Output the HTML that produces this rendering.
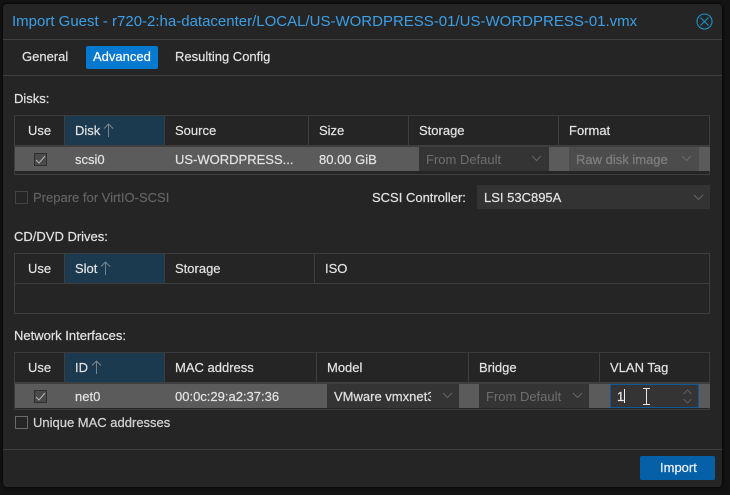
<!DOCTYPE html>
<html><head><meta charset="utf-8">
<style>
html,body{margin:0;padding:0;background:#131313;width:730px;height:495px;overflow:hidden}
*{box-sizing:border-box}
body{font-family:"Liberation Sans",sans-serif;font-size:12px;color:#e6e6e6;position:relative}
.a{position:absolute}
.t{position:absolute;white-space:nowrap;line-height:16px;font-size:13px;color:#e3e3e3;-webkit-text-stroke:.2px #e3e3e3;margin-top:1px}
.h{position:absolute;background:#3e3e3e}
.dim{color:#6f6f6f;-webkit-text-stroke:0}
</style></head><body>
<div class="a" style="left:3px;top:4px;width:719px;height:483px;background:#252525;border-radius:4px 4px 4px 4px;box-shadow:0 0 4px #000"></div>
<div class="t" style="left:12px;top:12px;font-size:15px;line-height:18px;color:#3c9fe6;-webkit-text-stroke:0">Import Guest - r720-2:ha-datacenter/LOCAL/US-WORDPRESS-01/US-WORDPRESS-01.vmx</div>
<svg class="a" style="left:696px;top:13px" width="17" height="17" viewBox="0 0 17 17" fill="none" stroke="#1f8fc4" stroke-width="1.1"><circle cx="8.5" cy="8.5" r="7.5"/><path d="M4.500 4.500l8 8M12.500 4.500l-8 8"/></svg>

<div class="h" style="left:3px;top:39px;width:719px;height:1px;background:#3f3f3f"></div>
<div class="h" style="left:3px;top:75px;width:719px;height:1px;background:#3f3f3f"></div>
<div class="a" style="left:86px;top:46px;width:72px;height:23px;background:#0578d0;border-radius:2px"></div>
<div class="t" style="left:22px;top:48px">General</div>
<div class="t" style="left:93px;top:48px;color:#fff;-webkit-text-stroke:.2px #fff">Advanced</div>
<div class="t" style="left:175px;top:48px">Resulting Config</div>

<!-- Disks -->
<div class="t" style="left:14px;top:90px">Disks:</div>
<div class="a" style="left:14px;top:115px;width:696px;height:60px;border:1px solid #3e3e3e;border-top-color:#3a3a3a"></div>
<div class="a" style="left:65px;top:116px;width:99px;height:29px;background:#1b3a4f"></div>
<div class="h" style="left:14px;top:145px;width:696px;height:2px"></div>
<div class="h" style="left:64px;top:116px;width:1px;height:29px"></div>
<div class="h" style="left:164px;top:116px;width:1px;height:29px"></div>
<div class="h" style="left:308px;top:116px;width:1px;height:29px"></div>
<div class="h" style="left:408px;top:116px;width:1px;height:29px"></div>
<div class="h" style="left:558px;top:116px;width:1px;height:29px"></div>
<div class="t" style="left:28px;top:122px">Use</div>
<div class="t" style="left:75px;top:122px">Disk</div>
<svg class="a" style="left:103px;top:123px" width="11" height="15" viewBox="0 0 11 15" fill="none" stroke="#7f8a93" stroke-width=".9"><path d="M5.500 14V1M1 5.500L5.500 1l4.500 4.500"/></svg>
<div class="t" style="left:175px;top:122px">Source</div>
<div class="t" style="left:319px;top:122px">Size</div>
<div class="t" style="left:419px;top:122px">Storage</div>
<div class="t" style="left:569px;top:122px">Format</div>

<div class="a" style="left:15px;top:147px;width:695px;height:24px;background:#5b5b5b"></div>
<svg class="a" style="left:34px;top:153px" width="13" height="13" viewBox="0 0 13 13" fill="#4a4a4a" stroke="#2f2f2f"><rect x=".5" y=".5" width="12" height="12"/><path d="M2 7l3 3 6-7" fill="none" stroke="#b5b5b5"/></svg>
<div class="t" style="left:75px;top:151px">scsi0</div>
<div class="t" style="left:175px;top:151px">US-WORDPRESS...</div>
<div class="t" style="left:319px;top:151px">80.00 GiB</div>
<div class="a" style="left:419px;top:147px;width:130px;height:24px;background:#343434"></div>
<div class="t dim" style="left:426px;top:151px">From Default</div>
<svg class="a" style="left:531px;top:155px" width="11" height="7" viewBox="0 0 11 7" fill="none" stroke="#666"><path d="M1 1l4.500 4.500L10 1"/></svg>
<div class="a" style="left:569px;top:147px;width:130px;height:24px;background:#4c4c4c"></div>
<div class="t" style="left:576px;top:151px;color:#7d7d7d;-webkit-text-stroke:.3px #7d7d7d">Raw disk image</div>
<svg class="a" style="left:681px;top:155px" width="11" height="7" viewBox="0 0 11 7" fill="none" stroke="#6a6a6a"><path d="M1 1l4.500 4.500L10 1"/></svg>

<div class="a" style="left:15px;top:191px;width:13px;height:13px;border:1px solid #444"></div>
<div class="t" style="left:33px;top:189px;color:#646464;-webkit-text-stroke:.15px #646464">Prepare for VirtIO-SCSI</div>
<div class="t" style="left:372px;top:189px">SCSI Controller:</div>
<div class="a" style="left:477px;top:185px;width:233px;height:24px;background:#333"></div>
<div class="t" style="left:484px;top:189px">LSI 53C895A</div>
<svg class="a" style="left:693px;top:194px" width="11" height="7" viewBox="0 0 11 7" fill="none" stroke="#666"><path d="M1 1l4.500 4.500L10 1"/></svg>

<!-- CD/DVD -->
<div class="t" style="left:14px;top:228px">CD/DVD Drives:</div>
<div class="a" style="left:14px;top:253px;width:696px;height:61px;border:1px solid #3e3e3e"></div>
<div class="a" style="left:65px;top:254px;width:99px;height:29px;background:#1b3a4f"></div>
<div class="h" style="left:14px;top:283px;width:696px;height:1px"></div>
<div class="h" style="left:64px;top:254px;width:1px;height:29px"></div>
<div class="h" style="left:164px;top:254px;width:1px;height:29px"></div>
<div class="h" style="left:314px;top:254px;width:1px;height:29px"></div>
<div class="t" style="left:28px;top:260px">Use</div>
<div class="t" style="left:75px;top:260px">Slot</div>
<svg class="a" style="left:100px;top:261px" width="11" height="15" viewBox="0 0 11 15" fill="none" stroke="#7f8a93" stroke-width=".9"><path d="M5.500 14V1M1 5.500L5.500 1l4.500 4.500"/></svg>
<div class="t" style="left:175px;top:260px">Storage</div>
<div class="t" style="left:325px;top:260px">ISO</div>

<!-- Network -->
<div class="t" style="left:14px;top:327px">Network Interfaces:</div>
<div class="a" style="left:14px;top:352px;width:696px;height:58px;border:1px solid #3a3a3a"></div>
<div class="a" style="left:65px;top:353px;width:99px;height:29px;background:#1b3a4f"></div>
<div class="h" style="left:14px;top:382px;width:696px;height:2px"></div>
<div class="h" style="left:64px;top:353px;width:1px;height:29px"></div>
<div class="h" style="left:164px;top:353px;width:1px;height:29px"></div>
<div class="h" style="left:316px;top:353px;width:1px;height:29px"></div>
<div class="h" style="left:468px;top:353px;width:1px;height:29px"></div>
<div class="h" style="left:599px;top:353px;width:1px;height:29px"></div>
<div class="t" style="left:28px;top:359px">Use</div>
<div class="t" style="left:75px;top:359px">ID</div>
<svg class="a" style="left:91px;top:360px" width="11" height="15" viewBox="0 0 11 15" fill="none" stroke="#7f8a93" stroke-width=".9"><path d="M5.500 14V1M1 5.500L5.500 1l4.500 4.500"/></svg>
<div class="t" style="left:175px;top:359px">MAC address</div>
<div class="t" style="left:327px;top:359px">Model</div>
<div class="t" style="left:479px;top:359px">Bridge</div>
<div class="t" style="left:610px;top:359px">VLAN Tag</div>

<div class="a" style="left:15px;top:384px;width:695px;height:24px;background:#5b5b5b"></div>
<svg class="a" style="left:34px;top:390px" width="13" height="13" viewBox="0 0 13 13" fill="#4a4a4a" stroke="#2f2f2f"><rect x=".5" y=".5" width="12" height="12"/><path d="M2 7l3 3 6-7" fill="none" stroke="#b5b5b5"/></svg>
<div class="t" style="left:75px;top:388px">net0</div>
<div class="t" style="left:175px;top:388px">00:0c:29:a2:37:36</div>
<div class="a" style="left:327px;top:384px;width:132px;height:24px;background:#343434"></div>
<div class="a" style="left:334px;top:388px;width:97px;height:18px;overflow:hidden"><div class="t" style="left:0;top:0">VMware vmxnet3</div></div>
<svg class="a" style="left:442px;top:392px" width="11" height="7" viewBox="0 0 11 7" fill="none" stroke="#666"><path d="M1 1l4.500 4.500L10 1"/></svg>
<div class="a" style="left:479px;top:384px;width:110px;height:24px;background:#343434"></div>
<div class="t dim" style="left:486px;top:388px">From Default</div>
<svg class="a" style="left:572px;top:392px" width="11" height="7" viewBox="0 0 11 7" fill="none" stroke="#666"><path d="M1 1l4.500 4.500L10 1"/></svg>
<div class="a" style="left:610px;top:384px;width:89px;height:24px;background:#343434;border:1px solid #0a5a9c"></div>
<div class="t" style="left:617px;top:388px;color:#f0f0f0">1</div>
<div class="a" style="left:624px;top:389px;width:1px;height:14px;background:#eee"></div>
<svg class="a" style="left:642px;top:388px" width="9" height="17" viewBox="0 0 9 17" fill="none" stroke="#e8e8e8" stroke-width="1"><path d="M1 .5h7M1 16.500h7M4.500 1v15"/></svg>
<svg class="a" style="left:682px;top:388px" width="11" height="17" viewBox="0 0 11 17" fill="none" stroke="#5c5c5c"><path d="M1.500 6L5.500 2l4 4M1.500 11l4 4 4-4"/></svg>

<div class="a" style="left:15px;top:416px;width:13px;height:13px;border:1px solid #6a6a6a"></div>
<div class="t" style="left:33px;top:414px;color:#cfcfcf">Unique MAC addresses</div>

<div class="h" style="left:3px;top:449px;width:719px;height:1px;background:#3f3f3f"></div>
<div class="a" style="left:640px;top:456px;width:75px;height:24px;background:#0560a8;border-radius:2px"></div>
<div class="t" style="left:660px;top:459px;color:#eef4fa;-webkit-text-stroke:.2px #eef4fa">Import</div>
</body></html>
